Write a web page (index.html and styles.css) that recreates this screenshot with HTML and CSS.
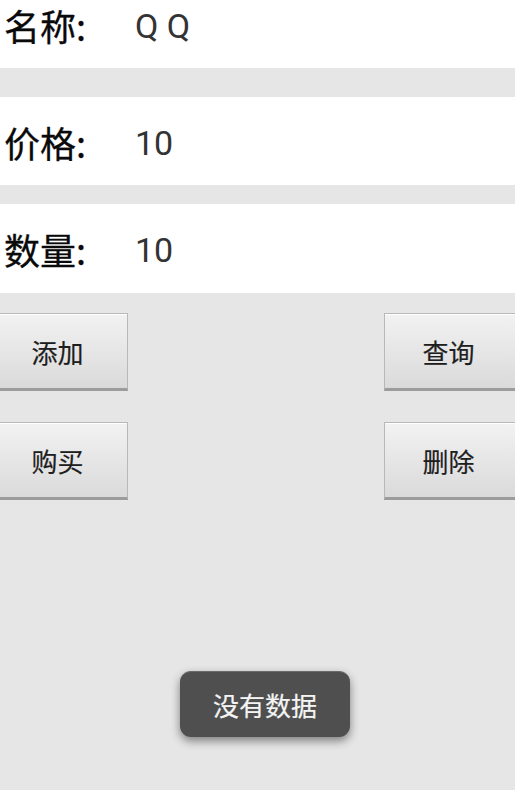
FILE: index.html
```html
<!DOCTYPE html>
<html lang="zh-CN">
<head>
<meta charset="utf-8">
<link rel="stylesheet" href="styles.css">
</head>
<body>
<div class="screen">
  <div class="form">
    <div class="row row-first"><span class="label">名称:</span><span class="value">Q Q</span></div>
    <div class="row row-second"><span class="label">价格:</span><span class="value">10</span></div>
    <div class="row row-third"><span class="label">数量:</span><span class="value">10</span></div>
  </div>
  <div class="actions">
    <div class="btn-row">
      <div class="btn btn-left">添加</div>
      <div class="btn btn-right">查询</div>
    </div>
    <div class="btn-row">
      <div class="btn btn-left">购买</div>
      <div class="btn btn-right">删除</div>
    </div>
  </div>
  <div class="toast">没有数据</div>
</div>
</body>
</html>
```

FILE: styles.css
```css
html, body {
  margin: 0;
  padding: 0;
}
body {
  background: #e6e6e6;
  font-family: Roboto, "Noto Sans CJK SC", sans-serif;
  overflow: hidden;
}
.screen {
  position: relative;
  width: 515px;
  height: 790px;
  overflow: hidden;
}
.form {
  display: flex;
  flex-direction: column;
}
.row {
  background: #ffffff;
  height: 88px;
  display: flex;
  align-items: center;
  padding-left: 4px;
  box-sizing: border-box;
}
.row-first {
  margin-top: -20px;
}
.row-second {
  margin-top: 29px;
}
.row-third {
  margin-top: 19px;
  height: 89px;
}
.label {
  font-family: "Noto Sans CJK SC", sans-serif;
  font-size: 36px;
  color: #0a0a0a;
  width: 131px;
  line-height: 1;
  padding-top: 1px;
  -webkit-text-stroke: 0.3px #0a0a0a;
}
.value {
  font-family: Roboto, "Noto Sans CJK SC", sans-serif;
  font-size: 34px;
  color: #333333;
  line-height: 1;
  padding-top: 3px;
}
.actions {
  display: flex;
  flex-direction: column;
  gap: 31px;
  margin-top: 20px;
}
.btn-row {
  display: flex;
  justify-content: space-between;
}
.btn {
  height: 78px;
  box-sizing: border-box;
  display: flex;
  align-items: center;
  justify-content: center;
  font-family: "Noto Sans CJK SC", sans-serif;
  font-size: 26px;
  color: #1e1e1e;
  background: linear-gradient(#f2f2f2, #dadada);
  border: 1px solid #b8b8b8;
  border-bottom: 3px solid #9c9c9c;
  box-shadow: inset 0 1px 0 #ffffff;
  -webkit-text-stroke: 0.2px #1e1e1e;
}
.btn-left {
  width: 141px;
  margin-left: -13px;
}
.btn-right {
  width: 135px;
  margin-right: -4px;
  padding-right: 6px;
}
.toast {
  position: absolute;
  left: 180px;
  top: 671px;
  width: 170px;
  height: 66px;
  box-sizing: border-box;
  border-radius: 11px;
  background: #4f4f4f;
  border-top: 1px solid #6a6a6a;
  box-shadow: 0 4px 10px rgba(0, 0, 0, 0.45);
  color: #f4f4f4;
  font-family: "Noto Sans CJK SC", sans-serif;
  font-size: 26px;
  display: flex;
  align-items: center;
  justify-content: center;
  -webkit-text-stroke: 0.2px #f4f4f4;
}
```
